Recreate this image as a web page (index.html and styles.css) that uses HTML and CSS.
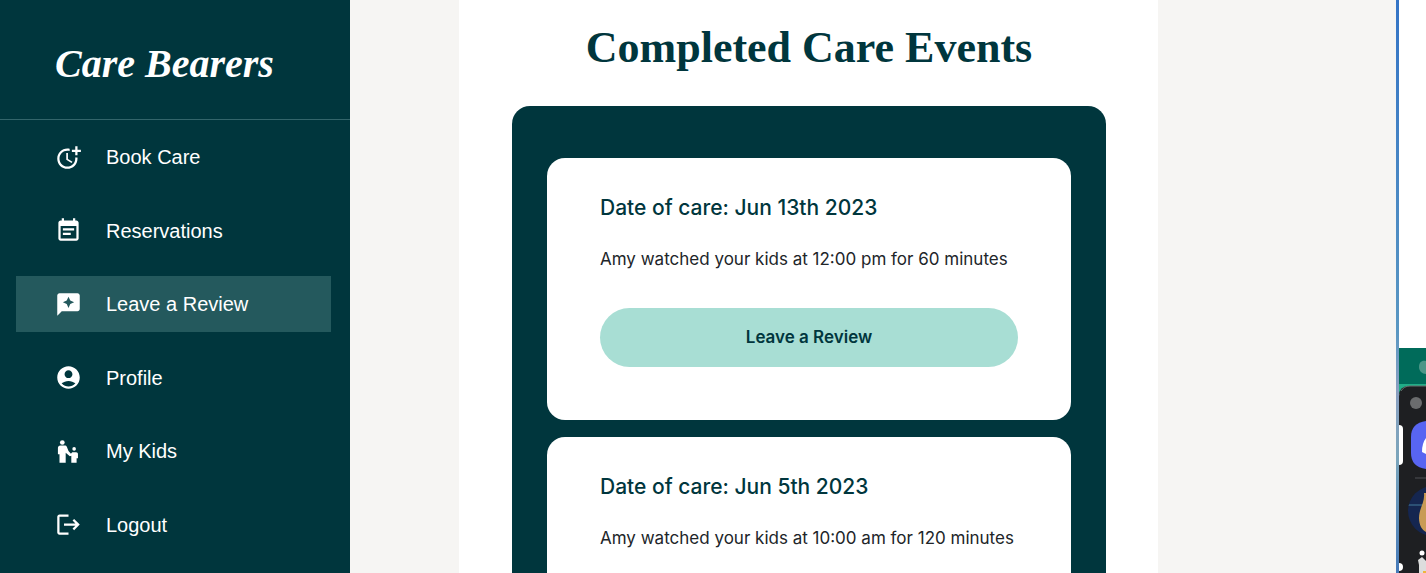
FILE: index.html
```html
<!DOCTYPE html>
<html lang="en">
<head>
<meta charset="utf-8">
<title>Care Bearers</title>
<meta name="viewport" content="width=device-width, initial-scale=1">
<link rel="stylesheet" href="styles.css">
</head>
<body>
<div class="app">
  <aside class="sidebar">
    <div class="brand"><a class="brand-link" href="#">Care Bearers</a></div>
    <nav class="nav" aria-label="Main">
      <a class="nav-item" href="#">
        <svg class="icon" viewBox="0 0 24 24" aria-hidden="true"><path d="M10 8v6l4.7 2.9.8-1.2-4-2.4V8z"/><path d="M17.92 12c.05.33.08.66.08 1 0 3.9-3.1 7-7 7s-7-3.100-7-7c0-3.900 3.100-7 7-7 .7 0 1.370.1 2 .290V4.230c-.64-.15-1.310-.23-2-.23-5 0-9 4-9 9s4 9 9 9 9-4 9-9c0-.34-.02-.67-.06-1h-2.020z"/><path d="M20 5V2h-2v3h-3v2h3v3h2V7h3V5z"/></svg>
        <span>Book Care</span></a>
      <a class="nav-item" href="#">
        <svg class="icon" viewBox="0 0 24 24" aria-hidden="true"><path d="M17 10H7v2h10v-2zm2-7h-1V1h-2v2H8V1H6v2H5c-1.110 0-1.990.9-1.990 2L3 19c0 1.100.89 2 2 2h14c1.100 0 2-.9 2-2V5c0-1.100-.9-2-2-2zm0 16H5V8h14v11zm-5-5H7v2h7v-2z"/></svg>
        <span>Reservations</span></a>
      <a class="nav-item active" href="#" aria-current="page">
        <svg class="icon" viewBox="0 0 24 24" aria-hidden="true"><path fill-rule="evenodd" d="M20 2H4c-1.100 0-2 .9-2 2v18l4-4h14c1.100 0 2-.9 2-2V4c0-1.100-.9-2-2-2zm-6.430 9.570L12 15l-1.570-3.430L7 10l3.430-1.570L12 5l1.570 3.430L17 10l-3.430 1.570z"/></svg>
        <span>Leave a Review</span></a>
      <a class="nav-item" href="#">
        <svg class="icon" viewBox="0 0 24 24" aria-hidden="true"><path d="M12 2C6.480 2 2 6.480 2 12s4.480 10 10 10 10-4.480 10-10S17.520 2 12 2zm0 3.500c1.930 0 3.500 1.570 3.500 3.500s-1.570 3.500-3.500 3.500-3.500-1.570-3.500-3.500 1.570-3.500 3.500-3.500zM12 20c-2.030 0-4.430-.82-6.140-2.880C7.550 15.800 9.680 15 12 15s4.450.8 6.140 2.120C16.430 19.180 14.030 20 12 20z"/></svg>
        <span>Profile</span></a>
      <a class="nav-item" href="#">
        <svg class="icon" viewBox="0 0 24 24" aria-hidden="true"><circle cx="6.500" cy="4" r="2.100"/><circle cx="17" cy="9.700" r="1.600"/><path d="M4.700 6.600h4c.9 0 1.500.4 1.800 1.200l1.500 3.700 2.200 2.400c.4-.7.900-1.300 1.800-1.300h2.800c.9 0 1.600.7 1.600 1.600v3.800h-1.200v4h-4.700v-6.300l-1.300.6-3.700-3.300v9H4v-7.500H2.600V8.700c0-1.200.9-2.100 2.100-2.100z"/></svg>
        <span>My Kids</span></a>
      <a class="nav-item" href="#">
        <svg class="icon" viewBox="0 0 24 24" aria-hidden="true"><path d="M17 7l-1.410 1.410L18.170 11H8v2h10.170l-2.580 2.580L17 17l5-5zM4 5h8V3H4c-1.100 0-2 .9-2 2v14c0 1.100.9 2 2 2h8v-2H4V5z"/></svg>
        <span>Logout</span></a>
    </nav>
  </aside>

  <main class="main">
    <section class="sheet">
      <h1 class="title">Completed Care Events</h1>
      <div class="events">
        <article class="card">
          <h2 class="card-date">Date of care: Jun 13th 2023</h2>
          <p class="card-text">Amy watched your kids at 12:00 pm for 60 minutes</p>
          <button class="review" type="button">Leave a Review</button>
        </article>
        <article class="card">
          <h2 class="card-date">Date of care: Jun 5th 2023</h2>
          <p class="card-text">Amy watched your kids at 10:00 am for 120 minutes</p>
        </article>
      </div>
    </section>
  </main>

  <div class="desktop" aria-hidden="true">
    <svg class="desktop-art" viewBox="0 0 30 573">
      <defs>
        <linearGradient id="edge" x1="0" y1="0" x2="0" y2="1"><stop offset="0" stop-color="#3474c6"/><stop offset=".58" stop-color="#5a97c2"/><stop offset=".68" stop-color="#8a9fc0"/><stop offset=".8" stop-color="#7ba5bb"/><stop offset="1" stop-color="#4579b8"/></linearGradient>
        <clipPath id="avatar"><circle cx="37" cy="511" r="25"/></clipPath>
      </defs>
      <path fill="#fff" d="M3 0h27v348H3z"/>
      <path fill="#006b5a" d="M3 348h27v36H3z"/>
      <path fill="#20ad87" d="M3 384h27v10H3z"/>
      <path fill="#1e1f22" d="M3 573V396q0-10 10-10h17v187z"/>
      <path fill="none" stroke="#66716f" d="M5 391q3-5 9-5h16"/>
      <path fill="#4c9688" d="M30 361c-4-1-7 1-7 6 0 4 3 7 7 7z"/>
      <circle cx="20" cy="403" r="6" fill="#6b6c6e"/>
      <path fill="#fff" d="M3 425q4 0 4 4v32q0 4-4 4z"/>
      <path fill="#5865f2" d="M30 421q-15 2-15 16v16q0 14 15 16z"/>
      <path fill="#fff" d="M30 438q-4 5-4 14l4 2z"/>
      <path fill="#36373b" d="M19 477h11v2H19z"/>
      <g clip-path="url(#avatar)"><path fill="#152650" d="M10 485h20v50H10z"/><path fill="#2c5075" d="M10 504h20v2H10z"/><path fill="#c99b55" d="M30 493h-2c1 10-5 15-5 25 0 7 3 12 7 14z"/></g>
      <circle cx="3" cy="567" r="4" fill="#fff"/>
      <circle cx="26" cy="553" r="2.500" fill="#fff"/>
      <path fill="#ddd" d="M23 573v-8l-1-5 4-3 4 4v12z"/>
      <path fill="#f0b43c" d="M27 571h3v2h-3z"/>
      <path fill="url(#edge)" d="M0 0h3v573H0z"/>
    </svg>
  </div>
</div>
</body>
</html>
```
FILE: styles.css
```css
* { box-sizing: border-box; }

body {
  margin: 0;
  color: #212529;
  font-family: Inter, "Liberation Sans", sans-serif;
}

.app {
  display: flex;
  height: 100vh;
  overflow: hidden;
  background: #f6f5f3;
}

.sidebar {
  display: flex;
  flex: 0 0 350px;
  flex-direction: column;
  background: #00363d;
}

.brand {
  padding: 36px 55px 27px;
  border-bottom: 1px solid #33656b;
}

.brand-link {
  display: block;
  color: #fff;
  font: italic bold 40px/56px "Liberation Serif", serif;
  text-decoration: none;
  white-space: nowrap;
}

.nav {
  display: flex;
  flex: 1;
  flex-direction: column;
  justify-content: space-between;
  padding: 9px 19px 20px 16px;
}

.nav-item {
  display: flex;
  align-items: center;
  gap: 24px;
  height: 56px;
  padding-left: 39px;
  color: #fff;
  font: 20px/28px "Liberation Sans", Arial, sans-serif;
  text-decoration: none;
}

.nav-item.active { background: #24595d; }

.icon {
  width: 27px;
  height: 27px;
  fill: currentColor;
}

.main {
  display: grid;
  flex: 1;
  grid-template-columns: 109fr 699fr 238fr;
  min-width: 0;
  overflow: hidden;
}

.sheet {
  grid-column: 2;
  padding: 20px 52px 20px 53px;
  background: #fff;
}

.title {
  margin: 0 0 30px;
  color: #00363d;
  font: bold 44px/56px "Liberation Serif", serif;
  text-align: center;
  white-space: nowrap;
}

.events {
  display: flex;
  flex-direction: column;
  gap: 17px;
  padding: 52px 35px;
  border-radius: 18px;
  background: #00363d;
}

.card {
  min-height: 262px;
  padding: 36px 53px 53px;
  border-radius: 18px;
  background: #fff;
}

.card-date {
  margin: 0 0 24px;
  color: #00363d;
  font-size: 21px;
  font-weight: 500;
  line-height: 28px;
}

.card-text {
  margin: 0 0 35px;
  font-size: 17px;
  line-height: 27px;
  white-space: nowrap;
}

.review {
  display: block;
  width: 100%;
  padding: 16px;
  border: 0;
  border-radius: 30px;
  background: #a8ded4;
  color: #00363d;
  font: 600 17px/27px Inter, sans-serif;
}

.desktop {
  flex: 0 0 30px;
  background: #fff;
}

.desktop-art {
  display: block;
  width: 30px;
}
```
